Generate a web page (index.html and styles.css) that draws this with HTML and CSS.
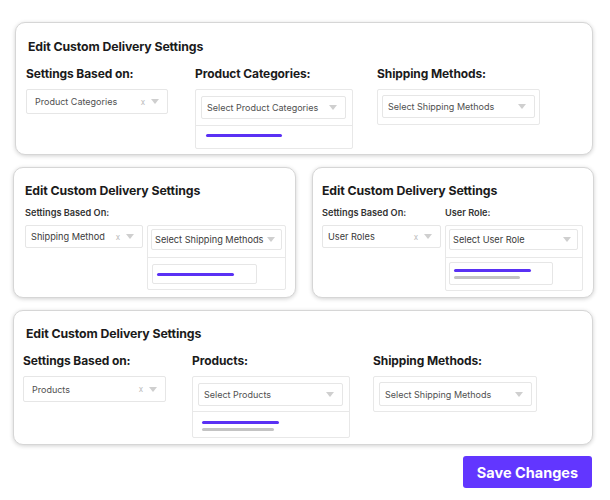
FILE: index.html
```html
<!DOCTYPE html>
<html>
<head>
<meta charset="utf-8">
<link rel="stylesheet" href="styles.css">
</head>
<body>
<div class="page">
  <section class="card card-a">
    <h2 class="title">Edit Custom Delivery Settings</h2>
    <div class="cols">
      <div class="col c1">
        <div class="label big">Settings Based on:</div>
        <div class="select s1"><span class="val">Product Categories</span><span class="x">x</span><span class="caret"></span></div>
      </div>
      <div class="col c2">
        <div class="label big">Product Categories:</div>
        <div class="panel p1">
          <div class="select inner i1"><span class="val">Select Product Categories</span><span class="caret"></span></div>
          <div class="drop d1"><div class="bar purple"></div></div>
        </div>
      </div>
      <div class="col c3">
        <div class="label big">Shipping Methods:</div>
        <div class="panel p2">
          <div class="select inner i2"><span class="val">Select Shipping Methods</span><span class="caret"></span></div>
        </div>
      </div>
    </div>
  </section>

  <div class="row">
    <section class="card card-b">
      <h2 class="title">Edit Custom Delivery Settings</h2>
      <div class="label small">Settings Based On:</div>
      <div class="cols">
        <div class="select s2"><span class="val v10">Shipping Method</span><span class="x">x</span><span class="caret"></span></div>
        <div class="panel p3">
          <div class="select inner i3"><span class="val v10">Select Shipping Methods</span><span class="caret"></span></div>
          <div class="drop d2">
            <div class="opt o1"><div class="bar purple"></div></div>
          </div>
        </div>
      </div>
    </section>

    <section class="card card-c">
      <h2 class="title">Edit Custom Delivery Settings</h2>
      <div class="cols">
        <div class="col c4">
          <div class="label small">Settings Based On:</div>
          <div class="select s3"><span class="val v10">User Roles</span><span class="x">x</span><span class="caret"></span></div>
        </div>
        <div class="col">
          <div class="label small">User Role:</div>
          <div class="panel p4">
            <div class="select inner i4"><span class="val v10">Select User Role</span><span class="caret"></span></div>
            <div class="drop d3">
              <div class="opt o2"><div class="bar purple"></div><div class="bar gray g1"></div></div>
            </div>
          </div>
        </div>
      </div>
    </section>
  </div>

  <section class="card card-d">
    <h2 class="title">Edit Custom Delivery Settings</h2>
    <div class="cols">
      <div class="col c5">
        <div class="label big">Settings Based on:</div>
        <div class="select s4"><span class="val">Products</span><span class="x">x</span><span class="caret"></span></div>
      </div>
      <div class="col c6">
        <div class="label big">Products:</div>
        <div class="panel p5">
          <div class="select inner i5"><span class="val">Select Products</span><span class="caret"></span></div>
          <div class="drop d4"><div class="bar purple"></div><div class="bar gray g2"></div></div>
        </div>
      </div>
      <div class="col">
        <div class="label big">Shipping Methods:</div>
        <div class="panel p6">
          <div class="select inner i6"><span class="val">Select Shipping Methods</span><span class="caret"></span></div>
        </div>
      </div>
    </div>
  </section>

  <div class="actions">
    <button class="save">Save Changes</button>
  </div>
</div>
</body>
</html>
```

FILE: styles.css
```css
* { box-sizing: border-box; }
html, body { margin: 0; padding: 0; background: #fff; }
body { font-family: "Inter", "Liberation Sans", sans-serif; color: #1b1b1b; }

.page { width: 610px; padding-top: 22px; }

.card {
  background: #fff;
  border: 1px solid #d6d6d6;
  border-radius: 10px;
  box-shadow: 0 1px 4px rgba(0,0,0,0.18);
}

.title {
  margin: 0;
  font-size: 12.3px;
  font-weight: 700;
  line-height: 16px;
  letter-spacing: -0.1px;
}

.cols { display: flex; align-items: flex-start; }
.col { display: flex; flex-direction: column; }

.label { font-weight: 700; }
.label.big { font-size: 12px; line-height: 16px; margin-bottom: 7px; letter-spacing: -0.1px; }
.label.small { font-size: 9.2px; line-height: 12px; font-weight: 600; color: #333; margin-bottom: 6px; }

.select {
  display: flex;
  align-items: center;
  border: 1px solid #e6e6e6;
  border-radius: 2px;
  background: #fff;
  padding: 0 8px;
}
.select.inner { padding: 0 8px 0 5px; }
.val { flex: 1; font-size: 9px; color: #505050; white-space: nowrap; overflow: hidden; }
.val.v10 { font-size: 9.2px; color: #3a3a3a; }
.x { font-size: 8px; color: #bbb; margin-right: 6px; }
.caret {
  flex: none;
  width: 0; height: 0;
  border-left: 4px solid transparent;
  border-right: 4px solid transparent;
  border-top: 5px solid #cfcfcf;
}

.panel { border: 1px solid #e8e8e8; border-radius: 2px; background: #fff; }
.drop { border-top: 1px solid #e8e8e8; }

.bar { height: 3px; border-radius: 2px; }
.bar.purple { background: #5a31f4; width: 77px; }
.bar.gray { background: #c3c3c3; height: 3px; margin-top: 4px; }

/* card A */
.card-a { margin-left: 15px; width: 578px; height: 133px; padding: 16px 0 0 10px; }
.card-a .title { margin-left: 2px; margin-bottom: 11px; }
.c1 { width: 169px; }
.c2 { width: 182px; }
.s1 { width: 142px; height: 25px; }
.p1 { width: 158px; height: 60px; padding-top: 6px; }
.i1 { width: 145px; height: 23px; margin-left: 5px; }
.d1 { margin-top: 6px; padding: 8px 0 0 10px; height: 23px; }
.d1 .bar { width: 76px; }
.p2 { width: 163px; height: 36px; padding: 5px 0 0 4px; }
.i2 { width: 153px; height: 23px; }

/* row */
.row { display: flex; margin-top: 12px; }
.card-b { margin-left: 13px; width: 283px; height: 131px; padding: 15px 0 0 11px; }
.card-b .title { margin-bottom: 8px; }
.s2 { width: 118px; height: 23px; margin-right: 4px; padding-left: 5px; }
.p3 { width: 139px; height: 65px; padding-top: 3px; }
.i3 { width: 131px; height: 21px; margin-left: 3px; }
.card-b .select.inner, .card-c .select.inner { padding: 0 6px 0 3px; }
.d2 { margin-top: 7px; padding: 6px 0 0 4px; height: 34px; }
.o1 { width: 105px; height: 20px; border: 1px solid #e6e6e6; border-radius: 2px; padding: 8px 0 0 4px; }

.card-c { margin-left: 16px; width: 282px; height: 131px; padding: 15px 0 0 9px; }
.card-c .title { margin-bottom: 8px; }
.c4 { width: 123px; }
.s3 { width: 119px; height: 23px; padding-left: 5px; }
.p4 { width: 138px; height: 66px; padding-top: 3px; }
.i4 { width: 129px; height: 21px; margin-left: 3px; }
.d3 { margin-top: 7px; padding: 4px 0 0 3px; height: 34px; }
.o2 { width: 104px; height: 23px; border: 1px solid #e6e6e6; border-radius: 2px; padding: 6px 0 0 4px; }
.g1 { width: 66px; }

/* card D */
.card-d { margin-left: 13px; margin-top: 12px; width: 580px; height: 135px; padding: 15px 0 0 9px; }
.card-d .title { margin-left: 3px; margin-bottom: 11px; }
.c5 { width: 169px; }
.c6 { width: 181px; }
.s4 { width: 143px; height: 26px; }
.p5 { width: 158px; height: 62px; padding-top: 6px; }
.i5 { width: 145px; height: 23px; margin-left: 5px; }
.d4 { margin-top: 5px; padding: 9px 0 0 9px; height: 26px; }
.g2 { width: 72px; }
.p6 { width: 164px; height: 36px; padding: 5px 0 0 5px; }
.i6 { width: 153px; height: 24px; }

.actions { display: flex; justify-content: flex-end; padding: 11px 18px 0 0; }
.save {
  width: 129px; height: 32px;
  border: none; border-radius: 3px;
  background: #6236ff;
  color: #fff;
  font-family: "Inter", "Liberation Sans", sans-serif;
  font-size: 14.5px;
  font-weight: 700;
  padding: 0;
}
```
